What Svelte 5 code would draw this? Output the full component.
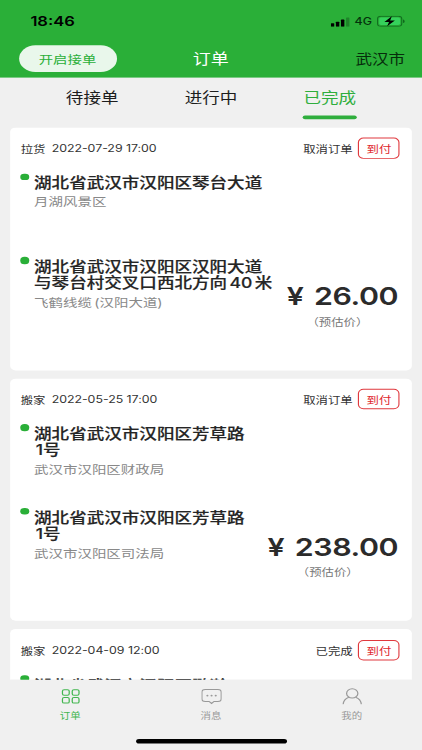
<script>
  const tabs = ['待接单', '进行中', '已完成'];
  let active = $state(2);

  const orders = [
    {
      type: '拉货', time: '2022-07-29 17:00', status: '取消订单', price: '26.00',
      from: [['湖北省武汉市汉阳区琴台大道'], '月湖风景区'],
      to: [['湖北省武汉市汉阳区汉阳大道', '与琴台村交叉口西北方向 40 米'], '飞鹤线缆 (汉阳大道)']
    },
    {
      type: '搬家', time: '2022-05-25 17:00', status: '取消订单', price: '238.00',
      from: [['湖北省武汉市汉阳区芳草路', '1号'], '武汉市汉阳区财政局'],
      to: [['湖北省武汉市汉阳区芳草路', '1号'], '武汉市汉阳区司法局']
    },
    {
      type: '搬家', time: '2022-04-09 12:00', status: '已完成', price: '',
      from: [['湖北省武汉市汉阳区鹏瀚'], ''],
      to: null
    }
  ];
</script>

<div class="viewport">
  <div class="screen">
    <header>
      <div class="status">
        <span class="clock">18:46</span>
        <span class="signals">
          <svg class="signal" width="17" height="11" viewBox="0 0 17 11">
            <rect x="0" y="7.2" width="3" height="3.8" rx=".6" />
            <rect x="4.5" y="5.6" width="3" height="5.4" rx=".6" />
            <rect x="9" y="3.2" width="3" height="7.8" rx=".6" />
            <rect x="13.5" y="1" width="3" height="10" rx=".6" opacity=".25" />
          </svg>
          <span class="net">4G</span>
          <svg class="battery" width="25" height="12" viewBox="0 0 25 12">
            <rect x=".5" y=".5" width="21.5" height="11" rx="3" fill="none" stroke="#0b5a18" stroke-opacity=".75" />
            <rect x="2" y="2" width="18.5" height="8" rx="1.7" fill="#35d15b" />
            <path d="M23.3 4v4c.8-.3 1.2-1 1.2-2s-.4-1.7-1.2-2z" fill="#0b5a18" />
            <path d="M13.2.5 6.6 6.8h4.1L9 11.5l6.900-6.400h-4.200z" fill="#000" />
          </svg>
        </span>
      </div>
      <div class="nav">
        <button class="start">开启接单</button>
        <h1>订单</h1>
        <span class="city">武汉市</span>
      </div>
    </header>

    <nav class="tabs">
      {#each tabs as tab, i}
        <button class="tab" class:active={active === i} onclick={() => (active = i)}><span>{tab}</span></button>
      {/each}
    </nav>

    <main>
      {#each orders as order}
        <article class="card">
          <div class="head">
            <span>{order.type}</span>
            <span class="time">{order.time}</span>
            <span class="state">{order.status}</span>
            <span class="badge">到付</span>
          </div>
          <div class="stops">
            {#each [order.from, order.to] as stop}
              {#if stop}
                <div class="stop">
                  <i class="dot"></i>
                  <div class="place">
                    {#each stop[0] as line}
                      <p class="addr" class:number={line === '1号'}>{line}</p>
                    {/each}
                    <p class="sub">{stop[1]}</p>
                  </div>
                </div>
              {/if}
            {/each}
            {#if order.price}
              <div class="price">
                <div class="amount"><span class="yen">¥</span>{order.price}</div>
                <div class="note">（预估价）</div>
              </div>
            {/if}
          </div>
        </article>
      {/each}
    </main>

    <footer>
      <div class="items">
        <div class="item on">
          <svg width="18" height="18" viewBox="0 0 18 18">
            <rect x="1.5" y="1.7" width="6" height="6" rx="1.5" />
            <rect x="10.2" y="1.7" width="6" height="6" rx="1.5" />
            <rect x="1.5" y="10.2" width="6" height="6" rx="1.5" />
            <rect x="10.2" y="10.2" width="6" height="6" rx="1.5" />
          </svg>
          <span>订单</span>
        </div>
        <div class="item">
          <svg width="18" height="18" viewBox="0 0 18 18">
            <path d="M3.400 1.500h11.200Q17.600 1.500 17.600 4.500v6.900Q17.600 14.400 14.600 14.400h-3.400L9 16.600l-2.200-2.200H3.400Q.4 14.400.4 11.400v-6.900Q.4 1.500 3.400 1.500z" />
            <g class="dots"><circle cx="5.3" cy="8" r=".95" /><circle cx="9" cy="8" r=".95" /><circle cx="12.7" cy="8" r=".95" /></g>
          </svg>
          <span>消息</span>
        </div>
        <div class="item">
          <svg width="18" height="18" viewBox="0 0 18 18">
            <ellipse cx="9" cy="5.7" rx="5" ry="5" />
            <path d="M.9 17.500C1.300 13.600 3.300 11.100 6 9.900M12 9.900c2.700 1.200 4.700 3.700 5.100 7.600" />
          </svg>
          <span>我的</span>
        </div>
      </div>
      <div class="home"></div>
    </footer>
  </div>
</div>

<style>
  :global(body) { margin: 0; }
  .viewport { width: 422px; height: 750px; overflow: hidden; background: #f0f0f0; }
  .screen {
    width: 375px; height: 812px; display: flex; flex-direction: column;
    transform: scale(1.12533, 0.92365); transform-origin: 0 0;
    background: #f0f0f0; color: #333; font-family: Inter, "Noto Sans CJK SC", sans-serif;
  }
  button { border: 0; background: none; padding: 0; font: inherit; }
  h1, p { margin: 0; font-weight: 400; }
  header { height: 84px; flex: none; background: #2aaf38; color: #000; }
  .status { height: 46px; display: flex; align-items: center; justify-content: space-between; padding: 0 15.5px 0 27px; }
  .clock { font-size: 14.7px; font-weight: 600; }
  .signals { display: flex; align-items: center; }
  .net { font-size: 11px; font-weight: 500; margin: 0 4px 0 4.5px; color: #04310b; }
  .nav { display: grid; grid-template-columns: 1fr auto 1fr; align-items: center; height: 29px; margin-top: 3px; padding: 0 15px 0 16.5px; }
  .start { width: 87px; height: 29px; border-radius: 15px; background: #e9f7eb; color: #2aaf38; font-size: 12.8px; }
  h1 { font-size: 16px; color: #fff; line-height: 24px; margin: -1px 0 0 -2px; }
  .city { justify-self: end; font-size: 14.7px; color: #062c0b; margin-top: -2px; }
  .tabs { flex: none; height: 54px; display: flex; justify-content: center; }
  .tab { width: 105.6px; height: 45px; font-size: 15.6px; color: #1d1d1d; }
  .tab span { display: inline-block; height: 45px; line-height: 44px; box-sizing: border-box; position: relative; }
  .tab.active { color: #2fae3d; }
  .tab.active span::after { content: ""; position: absolute; left: -.4px; right: -.4px; bottom: 0; height: 3.6px; border-radius: 2px; background: #2fae3d; }
  main { flex: 1; min-height: 0; overflow: hidden; padding: 0 9.4px; }
  .card { height: 262.5px; margin-bottom: 9.2px; box-sizing: border-box; border-radius: 5px; background: #fff; padding: 11px 10.6px 0 9px; }
  .head { display: flex; align-items: center; height: 23px; font-size: 11px; }
  .time { margin-left: 5.5px; letter-spacing: -.03px; }
  .state { margin-left: auto; }
  .badge { width: 36.6px; height: 22.5px; box-sizing: border-box; margin-left: 5px; border: 1px solid #e0393e; border-radius: 5px; color: #e0282d; display: flex; align-items: center; justify-content: center; }
  .stops { position: relative; margin-top: 15.5px; }
  .stop { display: flex; height: 90.6px; }
  .dot { width: 7.6px; height: 7.6px; border-radius: 50%; background: #2aaf38; flex: none; }
  .place { width: 222px; margin-left: 4.3px; padding-top: 1.8px; }
  .addr { font-size: 15.6px; line-height: 18.4px; font-weight: 500; color: #252525; -webkit-text-stroke: .2px #252525; white-space: nowrap; word-spacing: -2px; }
  .addr.number { padding-left: 1.5px; }
  .card:last-child .place { padding-top: 3px; }
  .sub { font-size: 12.85px; line-height: 20px; margin-top: 1.6px; color: #888; word-spacing: -1.5px; }
  .price { position: absolute; right: 1.2px; top: 116.8px; display: flex; flex-direction: column; align-items: center; }
  .amount { display: flex; font-size: 27px; line-height: 34px; font-weight: 600; color: #2b2b2b; letter-spacing: -.4px; }
  .yen { margin-right: 9.5px; }
  .note { font-size: 11px; line-height: 18px; margin: 1.5px 9px 0 0; color: #777; }
  footer { flex: none; height: 75.7px; background: #f0f0f0; display: flex; flex-direction: column; align-items: center; }
  .items { display: flex; width: 100%; height: 64px; }
  .item { flex: 1; display: flex; flex-direction: column; align-items: center; padding-top: 9px; color: #999; font-size: 9.3px; line-height: 14px; }
  .item svg { fill: none; stroke: currentColor; stroke-width: 1.1; margin-bottom: 5px; }
  .item .dots { fill: currentColor; stroke: none; }
  .item.on { color: #42b64f; }
  .home { width: 134px; height: 4.5px; border-radius: 3px; background: #000; }
</style>
